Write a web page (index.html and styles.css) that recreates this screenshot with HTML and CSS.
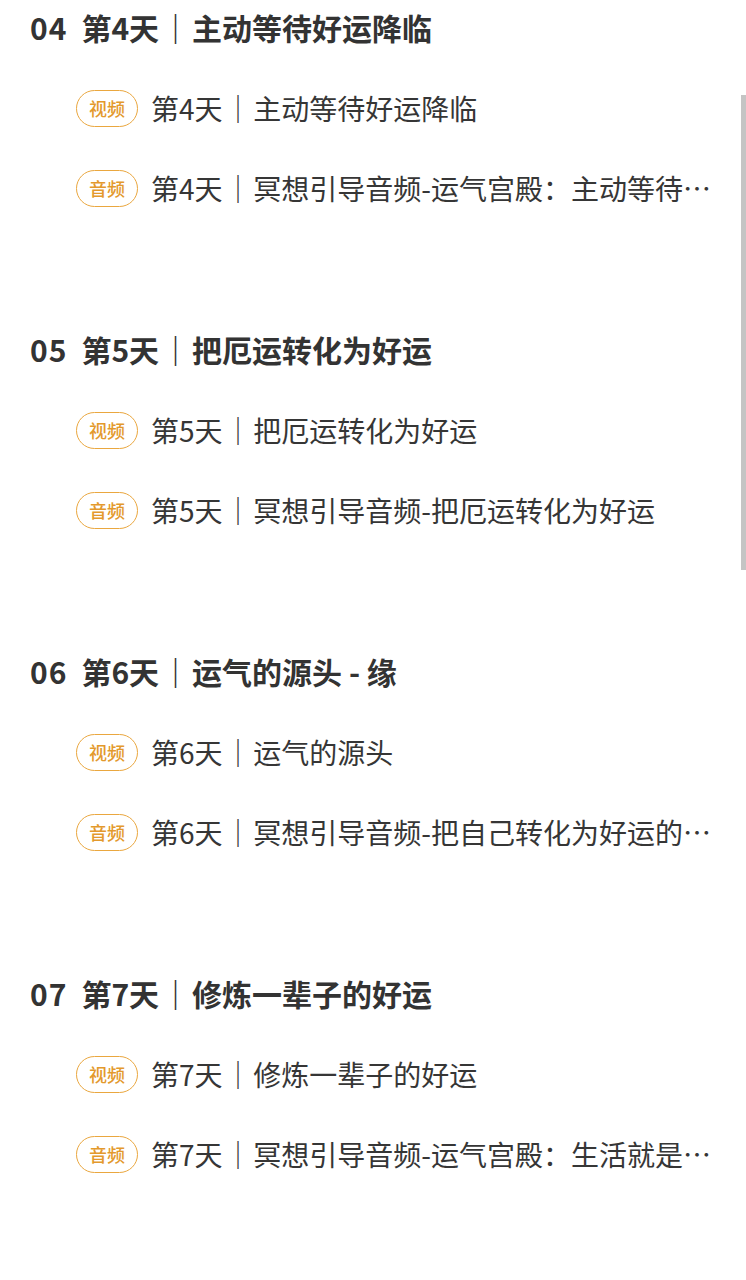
FILE: index.html
```html
<!DOCTYPE html>
<html lang="zh-CN">
<head>
<meta charset="utf-8">
<title>课程目录</title>
<link rel="stylesheet" href="styles.css">
</head>
<body>
<div class="catalog">
  <section class="chapter">
    <h2 class="chapter-title"><span class="chapter-no">04</span>第4天<span class="sep">｜</span>主动等待好运降临</h2>
    <ul class="lessons">
      <li class="lesson"><span class="tag">视频</span><span class="lesson-title">第4天<span class="sep">｜</span>主动等待好运降临</span></li>
      <li class="lesson"><span class="tag">音频</span><span class="lesson-title">第4天<span class="sep">｜</span>冥想引导音频-运气宫殿：主动等待好运降临</span></li>
    </ul>
  </section>
  <section class="chapter">
    <h2 class="chapter-title"><span class="chapter-no">05</span>第5天<span class="sep">｜</span>把厄运转化为好运</h2>
    <ul class="lessons">
      <li class="lesson"><span class="tag">视频</span><span class="lesson-title">第5天<span class="sep">｜</span>把厄运转化为好运</span></li>
      <li class="lesson"><span class="tag">音频</span><span class="lesson-title">第5天<span class="sep">｜</span>冥想引导音频-把厄运转化为好运</span></li>
    </ul>
  </section>
  <section class="chapter">
    <h2 class="chapter-title"><span class="chapter-no">06</span>第6天<span class="sep">｜</span>运气的源头 - 缘</h2>
    <ul class="lessons">
      <li class="lesson"><span class="tag">视频</span><span class="lesson-title">第6天<span class="sep">｜</span>运气的源头</span></li>
      <li class="lesson"><span class="tag">音频</span><span class="lesson-title">第6天<span class="sep">｜</span>冥想引导音频-把自己转化为好运的磁场</span></li>
    </ul>
  </section>
  <section class="chapter">
    <h2 class="chapter-title"><span class="chapter-no">07</span>第7天<span class="sep">｜</span>修炼一辈子的好运</h2>
    <ul class="lessons">
      <li class="lesson"><span class="tag">视频</span><span class="lesson-title">第7天<span class="sep">｜</span>修炼一辈子的好运</span></li>
      <li class="lesson"><span class="tag">音频</span><span class="lesson-title">第7天<span class="sep">｜</span>冥想引导音频-运气宫殿：生活就是一场修行</span></li>
    </ul>
  </section>
</div>
<div class="scrollbar"></div>
</body>
</html>
```
FILE: styles.css
```css
html, body {
  margin: 0;
  padding: 0;
  background: #ffffff;
}
body {
  font-family: "Noto Sans CJK SC", "Noto Sans", sans-serif;
  color: #333333;
  width: 746px;
  height: 1280px;
  overflow: hidden;
}
.catalog {
  display: flex;
  flex-direction: column;
}
.chapter {
  display: flex;
  flex-direction: column;
  padding-bottom: 94px;
}
.chapter-title {
  margin: 0;
  padding-left: 30px;
  height: 54px;
  line-height: 54px;
  font-size: 30px;
  font-weight: 700;
  color: #333333;
  white-space: nowrap;
}
.chapter-no {
  display: inline-block;
  margin-right: 14px;
  letter-spacing: 1px;
}
.sep {
  display: inline-block;
  width: 1.1em;
  text-align: center;
  font-weight: 400;
}
.chapter-title .sep {
  font-weight: 700;
}
.lessons {
  list-style: none;
  margin: 14px 0 0 0;
  padding: 0 30px 0 76px;
  display: flex;
  flex-direction: column;
}
.lesson {
  height: 80px;
  display: flex;
  align-items: center;
  gap: 13px;
  min-width: 0;
}
.tag {
  flex: none;
  box-sizing: border-box;
  width: 62px;
  height: 37px;
  border: 1.5px solid #eaa73f;
  border-radius: 19px;
  color: #e3992c;
  font-size: 18px;
  font-weight: 500;
  line-height: 34px;
  text-align: center;
}
.lesson-title {
  flex: 1;
  min-width: 0;
  font-size: 28px;
  color: #363636;
  white-space: nowrap;
  overflow: hidden;
  text-overflow: ellipsis;
}
.scrollbar {
  position: fixed;
  right: 0;
  top: 95px;
  width: 5px;
  height: 475px;
  background: #c4c4c4;
}
```
